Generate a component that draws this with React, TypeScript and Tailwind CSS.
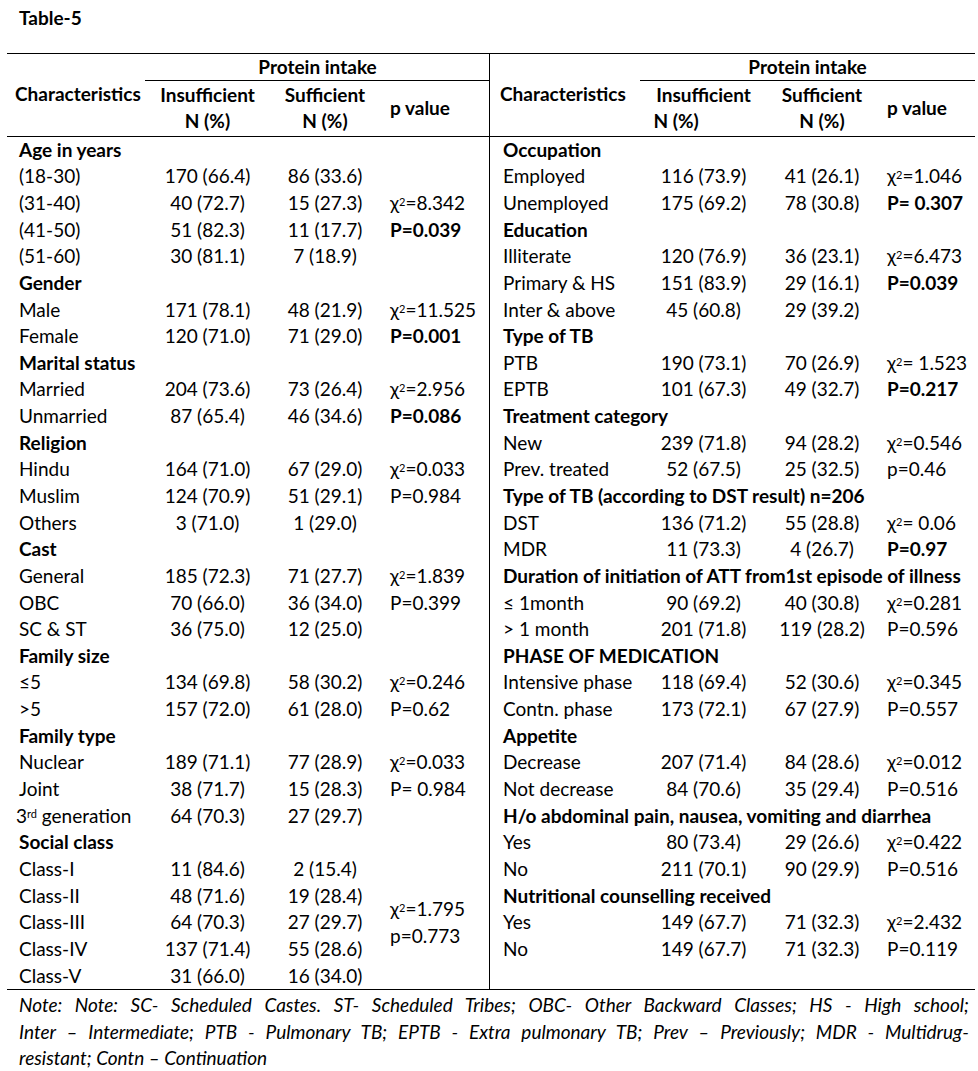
import React from 'react';

type Cell = string | React.ReactNode;
type Row =
  | { kind: 'group'; label: string }
  | { kind: 'data'; label: Cell; a: string; b: string; p?: Cell }
  | { kind: 'blank' };

const Chi = ({ v }: { v: string }) => (
  <span>
    χ<sup className="relative -top-[4px] text-[11px]">2</sup>
    {v}
  </span>
);

const B = ({ children }: { children: React.ReactNode }) => <span className="font-bold">{children}</span>;

const leftRows: Row[] = [
  { kind: 'group', label: 'Age in years' },
  { kind: 'data', label: '(18-30)', a: '170 (66.4)', b: '86 (33.6)' },
  { kind: 'data', label: '(31-40)', a: '40 (72.7)', b: '15 (27.3)', p: <Chi v="=8.342" /> },
  { kind: 'data', label: '(41-50)', a: '51 (82.3)', b: '11 (17.7)', p: <B>P=0.039</B> },
  { kind: 'data', label: '(51-60)', a: '30 (81.1)', b: '7 (18.9)' },
  { kind: 'group', label: 'Gender' },
  { kind: 'data', label: 'Male', a: '171 (78.1)', b: '48 (21.9)', p: <Chi v="=11.525" /> },
  { kind: 'data', label: 'Female', a: '120 (71.0)', b: '71 (29.0)', p: <B>P=0.001</B> },
  { kind: 'group', label: 'Marital status' },
  { kind: 'data', label: 'Married', a: '204 (73.6)', b: '73 (26.4)', p: <Chi v="=2.956" /> },
  { kind: 'data', label: 'Unmarried', a: '87 (65.4)', b: '46 (34.6)', p: <B>P=0.086</B> },
  { kind: 'group', label: 'Religion' },
  { kind: 'data', label: 'Hindu', a: '164 (71.0)', b: '67 (29.0)', p: <Chi v="=0.033" /> },
  { kind: 'data', label: 'Muslim', a: '124 (70.9)', b: '51 (29.1)', p: 'P=0.984' },
  { kind: 'data', label: 'Others', a: '3 (71.0)', b: '1 (29.0)' },
  { kind: 'group', label: 'Cast' },
  { kind: 'data', label: 'General', a: '185 (72.3)', b: '71 (27.7)', p: <Chi v="=1.839" /> },
  { kind: 'data', label: 'OBC', a: '70 (66.0)', b: '36 (34.0)', p: 'P=0.399' },
  { kind: 'data', label: 'SC & ST', a: '36 (75.0)', b: '12 (25.0)' },
  { kind: 'group', label: 'Family size' },
  { kind: 'data', label: '≤5', a: '134 (69.8)', b: '58 (30.2)', p: <Chi v="=0.246" /> },
  { kind: 'data', label: '>5', a: '157 (72.0)', b: '61 (28.0)', p: 'P=0.62' },
  { kind: 'group', label: 'Family type' },
  { kind: 'data', label: 'Nuclear', a: '189 (71.1)', b: '77 (28.9)', p: <Chi v="=0.033" /> },
  { kind: 'data', label: 'Joint', a: '38 (71.7)', b: '15 (28.3)', p: 'P= 0.984' },
  {
    kind: 'data',
    label: (
      <span className="-ml-[3px]">
        3<sup className="relative -top-[5px] text-[11px]">rd</sup> generation
      </span>
    ),
    a: '64 (70.3)',
    b: '27 (29.7)',
  },
  { kind: 'group', label: 'Social class' },
];

const socialRows = [
  ['Class-I', '11 (84.6)', '2 (15.4)'],
  ['Class-II', '48 (71.6)', '19 (28.4)'],
  ['Class-III', '64 (70.3)', '27 (29.7)'],
  ['Class-IV', '137 (71.4)', '55 (28.6)'],
  ['Class-V', '31 (66.0)', '16 (34.0)'],
];

const rightRows: Row[] = [
  { kind: 'group', label: 'Occupation' },
  { kind: 'data', label: 'Employed', a: '116 (73.9)', b: '41 (26.1)', p: <Chi v="=1.046" /> },
  { kind: 'data', label: 'Unemployed', a: '175 (69.2)', b: '78 (30.8)', p: <B>P= 0.307</B> },
  { kind: 'group', label: 'Education' },
  { kind: 'data', label: 'Illiterate', a: '120 (76.9)', b: '36 (23.1)', p: <Chi v="=6.473" /> },
  { kind: 'data', label: 'Primary & HS', a: '151 (83.9)', b: '29 (16.1)', p: <B>P=0.039</B> },
  { kind: 'data', label: 'Inter & above', a: '45 (60.8)', b: '29 (39.2)' },
  { kind: 'group', label: 'Type of TB' },
  { kind: 'data', label: 'PTB', a: '190 (73.1)', b: '70 (26.9)', p: <Chi v="= 1.523" /> },
  { kind: 'data', label: 'EPTB', a: '101 (67.3)', b: '49 (32.7)', p: <B>P=0.217</B> },
  { kind: 'group', label: 'Treatment category' },
  { kind: 'data', label: 'New', a: '239 (71.8)', b: '94 (28.2)', p: <Chi v="=0.546" /> },
  { kind: 'data', label: 'Prev. treated', a: '52 (67.5)', b: '25 (32.5)', p: 'p=0.46' },
  { kind: 'group', label: 'Type of TB (according to DST result) n=206' },
  { kind: 'data', label: 'DST', a: '136 (71.2)', b: '55 (28.8)', p: <Chi v="= 0.06" /> },
  { kind: 'data', label: 'MDR', a: '11 (73.3)', b: '4 (26.7)', p: <B>P=0.97</B> },
  { kind: 'group', label: 'Duration of initiation of ATT from1st episode of illness' },
  { kind: 'data', label: '≤ 1month', a: '90 (69.2)', b: '40 (30.8)', p: <Chi v="=0.281" /> },
  { kind: 'data', label: '> 1 month', a: '201 (71.8)', b: '119 (28.2)', p: 'P=0.596' },
  { kind: 'group', label: 'PHASE OF MEDICATION' },
  { kind: 'data', label: 'Intensive phase', a: '118 (69.4)', b: '52 (30.6)', p: <Chi v="=0.345" /> },
  { kind: 'data', label: 'Contn. phase', a: '173 (72.1)', b: '67 (27.9)', p: 'P=0.557' },
  { kind: 'group', label: 'Appetite' },
  { kind: 'data', label: 'Decrease', a: '207 (71.4)', b: '84 (28.6)', p: <Chi v="=0.012" /> },
  { kind: 'data', label: 'Not decrease', a: '84 (70.6)', b: '35 (29.4)', p: 'P=0.516' },
  { kind: 'group', label: 'H/o abdominal pain, nausea, vomiting and diarrhea' },
  { kind: 'data', label: 'Yes', a: '80 (73.4)', b: '29 (26.6)', p: <Chi v="=0.422" /> },
  { kind: 'data', label: 'No', a: '211 (70.1)', b: '90 (29.9)', p: 'P=0.516' },
  { kind: 'group', label: 'Nutritional counselling received' },
  { kind: 'data', label: 'Yes', a: '149 (67.7)', b: '71 (32.3)', p: <Chi v="=2.432" /> },
  { kind: 'data', label: 'No', a: '149 (67.7)', b: '71 (32.3)', p: 'P=0.119' },
  { kind: 'blank' },
];

const LEFT = 'grid-cols-[138px_125px_110px_110px]';
const RIGHT = 'grid-cols-[150px_127px_110px_98px]';

function Rows({ rows, cols, labelPad }: { rows: Row[]; cols: string; labelPad: string }) {
  return (
    <>
      {rows.map((r, i) => {
        if (r.kind === 'blank') return <div key={i} className="h-[26.65px]" />;
        if (r.kind === 'group')
          return (
            <div key={i} className={`h-[26.65px] whitespace-nowrap font-bold ${labelPad}`}>
              {r.label}
            </div>
          );
        return (
          <div key={i} className={`grid h-[26.65px] ${cols}`}>
            <div className={`whitespace-nowrap ${labelPad}`}>{r.label}</div>
            <div className="text-center whitespace-nowrap">{r.a}</div>
            <div className="text-center whitespace-nowrap">{r.b}</div>
            <div className="pl-[10px] whitespace-nowrap">{r.p}</div>
          </div>
        );
      })}
    </>
  );
}

function Header({ cols, charPad, insLeft }: { cols: string; charPad: string; insLeft?: boolean }) {
  return (
    <div className={`grid ${cols} grid-rows-[27px_55px] border-b border-black`}>
      <div className={`row-span-2 flex items-center font-bold whitespace-nowrap ${charPad}`}>Characteristics</div>
      <div className="col-span-3 border-b border-black text-center font-bold">Protein intake</div>
      <div className="flex flex-col items-center justify-center font-bold">
        <div>Insufficient</div>
        <div className={insLeft ? 'w-[100px] text-left' : ''}>N (%)</div>
      </div>
      <div className="flex flex-col items-center justify-center font-bold">
        <div>Sufficient</div>
        <div>N (%)</div>
      </div>
      <div className="flex items-center pl-[10px] font-bold">p value</div>
    </div>
  );
}

export default function App() {
  return (
    <div
      className="h-[1071px] w-[978px] bg-white text-[19px] leading-[26.65px] text-black"
      style={{ fontFamily: 'Lato, "DejaVu Sans", sans-serif' }}
    >
      <div className="px-[19px] pt-[5px] font-bold">Table-5</div>
      <div className="ml-[7px] mt-[21px] w-[968px]">
        <div className="flex border-t border-b border-black">
          <div className="w-[483px] border-r border-black">
            <Header cols={LEFT} charPad="pl-[8px]" />
            <Rows rows={leftRows} cols={LEFT} labelPad="pl-[12px]" />
            <div className={`grid ${LEFT}`}>
              <div>
                {socialRows.map((s) => (
                  <div key={s[0]} className="h-[26.65px] pl-[12px]">
                    {s[0]}
                  </div>
                ))}
              </div>
              <div className="text-center">
                {socialRows.map((s) => (
                  <div key={s[0]} className="h-[26.65px]">
                    {s[1]}
                  </div>
                ))}
              </div>
              <div className="text-center">
                {socialRows.map((s) => (
                  <div key={s[0]} className="h-[26.65px]">
                    {s[2]}
                  </div>
                ))}
              </div>
              <div className="flex flex-col justify-center pl-[10px]">
                <div>
                  <Chi v="=1.795" />
                </div>
                <div>p=0.773</div>
              </div>
            </div>
          </div>
          <div className="w-[485px]">
            <Header cols={RIGHT} charPad="pl-[10px]" insLeft />
            <Rows rows={rightRows} cols={RIGHT} labelPad="pl-[13px]" />
          </div>
        </div>
        <div className="w-[962px] pl-[12px] pt-[2px] italic">
          <div className="whitespace-nowrap text-justify [text-align-last:justify]">
            Note: Note: SC- Scheduled Castes. ST- Scheduled Tribes; OBC- Other Backward Classes; HS - High school;
          </div>
          <div className="whitespace-nowrap text-justify [text-align-last:justify]">
            Inter – Intermediate; PTB - Pulmonary TB; EPTB - Extra pulmonary TB; Prev – Previously; MDR - Multidrug-
          </div>
          <div className="whitespace-nowrap">resistant; Contn – Continuation</div>
        </div>
      </div>
    </div>
  );
}
